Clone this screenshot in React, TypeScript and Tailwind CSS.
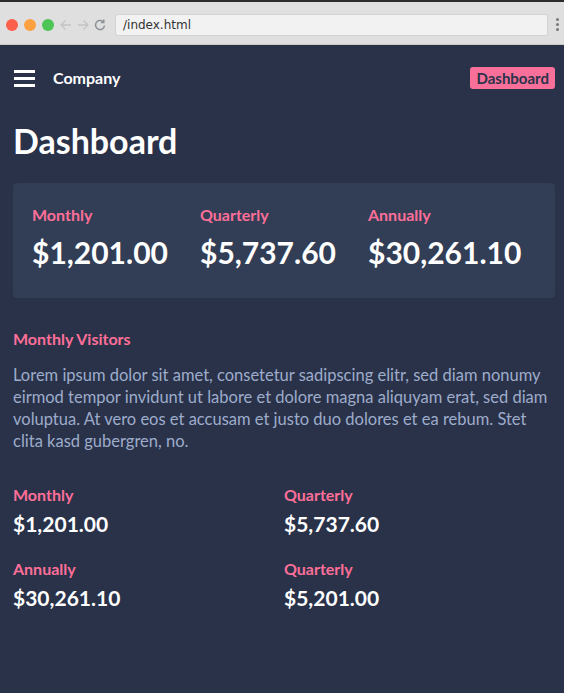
import React from "react";

const stats = [
  { label: "Monthly", value: "$1,201.00" },
  { label: "Quarterly", value: "$5,737.60" },
  { label: "Annually", value: "$30,261.10" },
];

const small = [
  { label: "Monthly", value: "$1,201.00" },
  { label: "Quarterly", value: "$5,737.60" },
  { label: "Annually", value: "$30,261.10" },
  { label: "Quarterly", value: "$5,201.00" },
];

export default function App() {
  return (
    <div className="w-[564px] h-[693px] flex flex-col bg-[#293249] overflow-hidden" style={{ fontFamily: 'Lato, sans-serif' }}>
      {/* Browser chrome */}
      <div className="h-[2px] bg-[#2b2b2b]" />
      <div className="h-[43px] bg-[#dfdfdf] border-b border-[#c9c9c9] flex items-center pl-[6px] pr-[4px] pt-[3px]">
        <div className="flex items-center gap-[6px]">
          <span className="w-[12px] h-[12px] rounded-full bg-[#fc5f4b]" />
          <span className="w-[12px] h-[12px] rounded-full bg-[#fda140]" />
          <span className="w-[12px] h-[12px] rounded-full bg-[#4cc554]" />
        </div>
        <div className="flex items-center ml-[5px] gap-[3px] text-[#c4c4c4]">
          <svg width="14" height="14" viewBox="0 0 14 14" fill="none" stroke="currentColor" strokeWidth="1.3"><path d="M12 7H2M6.5 2.5 2 7l4.5 4.5" /></svg>
          <svg width="14" height="14" viewBox="0 0 14 14" fill="none" stroke="currentColor" strokeWidth="1.3"><path d="M2 7h10M7.5 2.5 12 7l-4.5 4.5" /></svg>
          <svg width="14" height="14" viewBox="0 0 14 14" fill="none" stroke="#8d9198" strokeWidth="1.5"><path d="M11.5 7.5A4.5 4.5 0 1 1 10 3.6" /><path d="M10.8 1.6v2.8H8" /></svg>
        </div>
        <div className="ml-[8px] w-[433px] h-[22px] bg-[#f2f2f2] border border-[#d3d3d3] rounded-[3px] flex items-center pl-[7px] text-[12px] text-[#333]" style={{ fontFamily: '"DejaVu Sans", sans-serif' }}>
          /index.html
        </div>
        <div className="ml-auto flex flex-col gap-[2px] pr-[1px]">
          <span className="w-[3px] h-[3px] bg-[#777] rounded-full" />
          <span className="w-[3px] h-[3px] bg-[#777] rounded-full" />
          <span className="w-[3px] h-[3px] bg-[#777] rounded-full" />
        </div>
      </div>

      {/* Nav */}
      <div className="flex items-center justify-between pl-[14px] pr-[9px] pt-[21px]">
        <div className="flex items-center">
          <div className="flex flex-col gap-[4px] w-[21px]">
            <span className="h-[3px] bg-white" />
            <span className="h-[3px] bg-white" />
            <span className="h-[3px] bg-white" />
          </div>
          <span className="ml-[18px] text-white font-bold text-[16px]">Company</span>
        </div>
        <span className="bg-[#f8709a] text-[#2a3349] font-bold text-[15px] leading-[22px] px-[6px] rounded-[3px]">Dashboard</span>
      </div>

      <div className="pl-[13px] pr-[9px]">
        <h1 className="text-white font-bold text-[34px] mt-[31px] leading-[40px]">Dashboard</h1>

        <div className="mt-[22px] bg-[#323d56] rounded-[4px] h-[115px] px-[19px] pt-[22px] grid grid-cols-3">
          {stats.map((s) => (
            <div key={s.value}>
              <div className="text-[#fd6f98] font-bold text-[16px] leading-[20px]">{s.label}</div>
              <div className="text-white font-bold text-[30px] leading-[36px] mt-[9px]">{s.value}</div>
            </div>
          ))}
        </div>

        <div className="mt-[30px] text-[#fd6f98] font-bold text-[16px] leading-[22px]">Monthly Visitors</div>
        <p className="mt-[14px] text-[#9eaccb] text-[16.5px] leading-[22px]">
          Lorem ipsum dolor sit amet, consetetur sadipscing elitr, sed diam nonumy eirmod tempor invidunt ut labore et dolore magna aliquyam erat, sed diam voluptua. At vero eos et accusam et justo duo dolores et ea rebum. Stet clita kasd gubergren, no.
        </p>

        <div className="mt-[32px] grid grid-cols-2 gap-y-[20px]">
          {small.map((s, i) => (
            <div key={i}>
              <div className="text-[#fd6f98] font-bold text-[16px] leading-[22px]">{s.label}</div>
              <div className="text-white font-bold text-[21px] leading-[28px] mt-[4px]">{s.value}</div>
            </div>
          ))}
        </div>
      </div>
    </div>
  );
}
